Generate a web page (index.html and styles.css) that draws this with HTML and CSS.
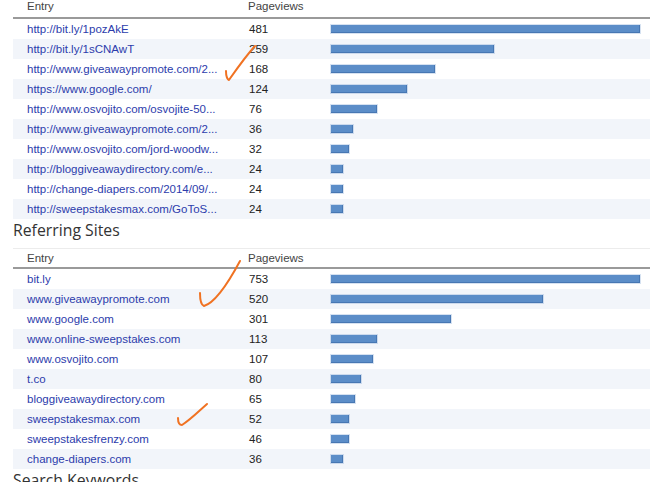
FILE: index.html
```html
<!DOCTYPE html>
<html>
<head>
<meta charset="utf-8">
<link rel="stylesheet" href="styles.css">
</head>
<body>
<div class="page">
  <div class="table first">
    <div class="row head"><div class="c-entry">Entry</div><div class="c-pv">Pageviews</div><div class="c-bar"></div></div>
    <div class="row"><div class="c-entry"><a>http://bit.ly/1pozAkE</a></div><div class="c-pv">481</div><div class="c-bar"><span class="bar" style="width:309px"></span></div></div>
    <div class="row"><div class="c-entry"><a>http://bit.ly/1sCNAwT</a></div><div class="c-pv">259</div><div class="c-bar"><span class="bar" style="width:163px"></span></div></div>
    <div class="row"><div class="c-entry"><a>http://www.giveawaypromote.com/2...</a></div><div class="c-pv">168</div><div class="c-bar"><span class="bar" style="width:104px"></span></div></div>
    <div class="row"><div class="c-entry"><a>https://www.google.com/</a></div><div class="c-pv">124</div><div class="c-bar"><span class="bar" style="width:76px"></span></div></div>
    <div class="row"><div class="c-entry"><a>http://www.osvojito.com/osvojite-50...</a></div><div class="c-pv">76</div><div class="c-bar"><span class="bar" style="width:46px"></span></div></div>
    <div class="row"><div class="c-entry"><a>http://www.giveawaypromote.com/2...</a></div><div class="c-pv">36</div><div class="c-bar"><span class="bar" style="width:22px"></span></div></div>
    <div class="row"><div class="c-entry"><a>http://www.osvojito.com/jord-woodw...</a></div><div class="c-pv">32</div><div class="c-bar"><span class="bar" style="width:18px"></span></div></div>
    <div class="row"><div class="c-entry"><a>http://bloggiveawaydirectory.com/e...</a></div><div class="c-pv">24</div><div class="c-bar"><span class="bar" style="width:12px"></span></div></div>
    <div class="row"><div class="c-entry"><a>http://change-diapers.com/2014/09/...</a></div><div class="c-pv">24</div><div class="c-bar"><span class="bar" style="width:12px"></span></div></div>
    <div class="row"><div class="c-entry"><a>http://sweepstakesmax.com/GoToS...</a></div><div class="c-pv">24</div><div class="c-bar"><span class="bar" style="width:12px"></span></div></div>
  </div>

  <h2 class="section">Referring Sites</h2>

  <div class="table second">
    <div class="row head"><div class="c-entry">Entry</div><div class="c-pv">Pageviews</div><div class="c-bar"></div></div>
    <div class="row"><div class="c-entry"><a>bit.ly</a></div><div class="c-pv">753</div><div class="c-bar"><span class="bar" style="width:309px"></span></div></div>
    <div class="row"><div class="c-entry"><a>www.giveawaypromote.com</a></div><div class="c-pv">520</div><div class="c-bar"><span class="bar" style="width:212px"></span></div></div>
    <div class="row"><div class="c-entry"><a>www.google.com</a></div><div class="c-pv">301</div><div class="c-bar"><span class="bar" style="width:120px"></span></div></div>
    <div class="row"><div class="c-entry"><a>www.online-sweepstakes.com</a></div><div class="c-pv">113</div><div class="c-bar"><span class="bar" style="width:46px"></span></div></div>
    <div class="row"><div class="c-entry"><a>www.osvojito.com</a></div><div class="c-pv">107</div><div class="c-bar"><span class="bar" style="width:42px"></span></div></div>
    <div class="row"><div class="c-entry"><a>t.co</a></div><div class="c-pv">80</div><div class="c-bar"><span class="bar" style="width:30px"></span></div></div>
    <div class="row"><div class="c-entry"><a>bloggiveawaydirectory.com</a></div><div class="c-pv">65</div><div class="c-bar"><span class="bar" style="width:24px"></span></div></div>
    <div class="row"><div class="c-entry"><a>sweepstakesmax.com</a></div><div class="c-pv">52</div><div class="c-bar"><span class="bar" style="width:18px"></span></div></div>
    <div class="row"><div class="c-entry"><a>sweepstakesfrenzy.com</a></div><div class="c-pv">46</div><div class="c-bar"><span class="bar" style="width:18px"></span></div></div>
    <div class="row"><div class="c-entry"><a>change-diapers.com</a></div><div class="c-pv">36</div><div class="c-bar"><span class="bar" style="width:12px"></span></div></div>
  </div>

  <h2 class="section">Search Keywords</h2>
</div>

<svg class="marks" width="650" height="482" viewBox="0 0 650 482" xmlns="http://www.w3.org/2000/svg">
  <path d="M226,71 C226,76 227,79 229,80 C236,70 245,57 255,46"/>
  <path d="M200,293 C200,300 201,305 204,306 C214,303 225,289 240,261"/>
  <path d="M178,418 C178,422 179,425 182,425 C190,420 198,412 207,404"/>
</svg>
</body>
</html>
```

FILE: styles.css
```css
html, body {
  margin: 0;
  padding: 0;
  background: #ffffff;
}

body {
  width: 650px;
  height: 482px;
  overflow: hidden;
  position: relative;
  font-family: "Liberation Sans", Arial, sans-serif;
  font-size: 11.5px;
  color: #222;
}

.page {
  padding-left: 13px;
}

.table {
  display: flex;
  flex-direction: column;
}

.row {
  display: grid;
  grid-template-columns: 235px 83px 1fr;
  height: 20px;
  align-items: center;
}

.row:nth-child(odd):not(.head) {
  background: #f2f5fa;
}

.row.head {
  height: 17px;
  border-bottom: 2px solid #9a9a9a;
  color: #444;
  align-items: center;
}

.first .row.head {
  align-items: start;
  padding-top: 0;
  height: 17px;
}

.second .row.head {
  border-top: 1px solid #ececec;
  height: 18px;
}

.c-entry {
  padding-left: 14px;
  white-space: nowrap;
  overflow: hidden;
}

.c-entry a {
  color: #2c3cac;
  text-decoration: none;
}

.c-pv {
  padding-left: 1px;
}

.row.head .c-pv {
  padding-left: 0;
}

.c-bar {
  display: flex;
  align-items: center;
  padding-right: 10px;
}

.bar {
  display: block;
  height: 8px;
  background: #5b8dc8;
  box-shadow: inset -1px -1px 0 #4777b3, 0 0 0 1px rgba(91, 141, 200, 0.25);
}

.section {
  margin: 0;
  height: 29px;
  line-height: 22px;
  font-family: "Open Sans", "Liberation Sans", sans-serif;
  font-weight: 400;
  font-size: 15.8px;
  color: #333;
}

.marks {
  position: absolute;
  left: 0;
  top: 0;
  pointer-events: none;
}

.marks path {
  fill: none;
  stroke: #f07222;
  stroke-width: 2;
  stroke-linecap: round;
  stroke-linejoin: round;
}
```
